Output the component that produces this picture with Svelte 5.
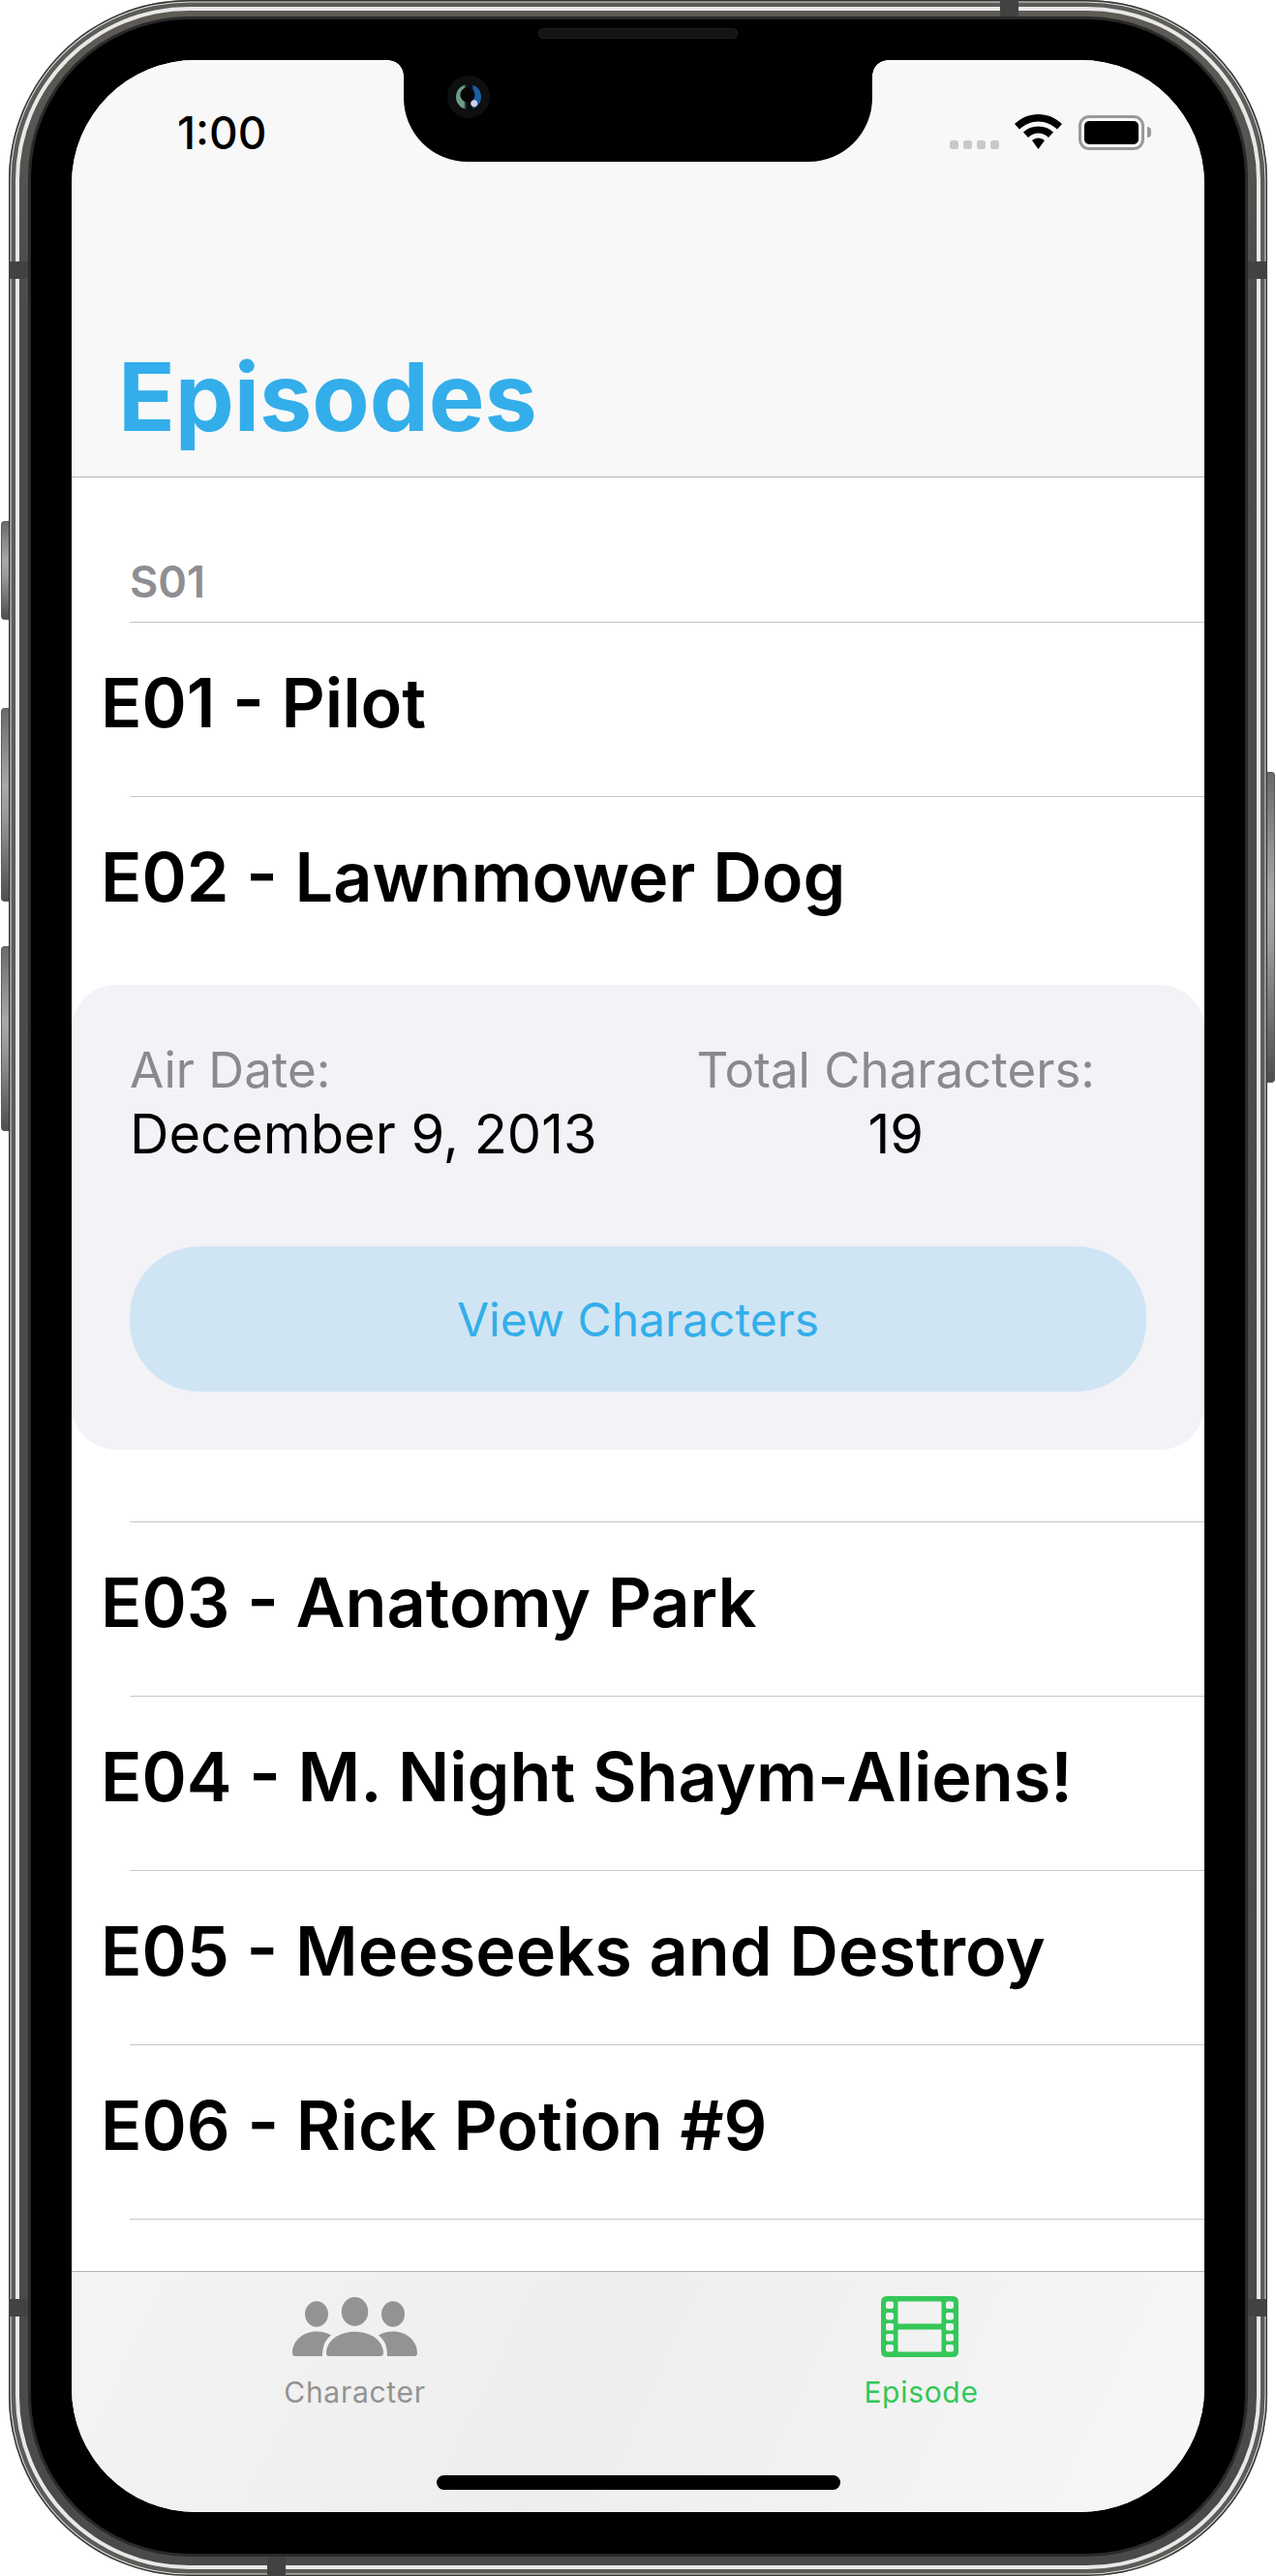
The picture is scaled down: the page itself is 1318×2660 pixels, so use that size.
<script>
    const before = ["E01 - Pilot", "E02 - Lawnmower Dog"];
    const after = [
        "E03 - Anatomy Park",
        "E04 - M. Night Shaym-Aliens!",
        "E05 - Meeseeks and Destroy",
        "E06 - Rick Potion #9",
    ];
</script>

<div class="device">
    <span class="side vol-mute"></span>
    <span class="side vol-up"></span>
    <span class="side vol-down"></span>
    <span class="side power"></span>

    <div class="band">
        <span class="antenna top"></span>
        <span class="antenna left-a"></span>
        <span class="antenna left-b"></span>
        <span class="antenna right-a"></span>
        <span class="antenna right-b"></span>
        <span class="antenna bottom"></span>

        <div class="bezel">
            <span class="speaker"></span>
            <div class="screen">
                <div class="notch">
                    <span class="camera"><span class="lens"></span></span>
                </div>

                <header class="nav">
                    <div class="status">
                        <span class="time">1:00</span>
                        <div class="status-icons">
                            <span class="signal"><i></i><i></i><i></i><i></i></span>
                            <svg class="wifi" viewBox="0 0 49 36" aria-hidden="true">
                                <path d="M24.500 0C15 0 7 3.500 0 10L5 15.500C10.500 10.500 17 7.500 24.500 7.500S38.500 10.500 44 15.500L49 10C42 3.500 34 0 24.500 0Z" />
                                <path d="M24.500 12.500C18 12.500 13 14.500 9 18.500L14 24C17 21 20.500 19.500 24.500 19.500S32 21 35 24L40 18.500C36 14.500 31 12.500 24.500 12.500Z" />
                                <path d="M24.500 24.500C22 24.500 20 25.500 18 27L24.500 36L31 27C29 25.500 27 24.500 24.500 24.500Z" />
                            </svg>
                            <span class="battery"><span class="charge"></span><span class="nub"></span></span>
                        </div>
                    </div>
                    <h1>Episodes</h1>
                </header>

                <main class="list">
                    <div class="season">S01</div>

                    {#each before as title, i}
                        <div class="row" class:plain={i === before.length - 1}>{title}</div>
                    {/each}

                    <section class="detail">
                        <div class="facts">
                            <div class="fact">
                                <div class="label">Air Date:</div>
                                <div class="value">December 9, 2013</div>
                            </div>
                            <div class="fact centered">
                                <div class="label">Total Characters:</div>
                                <div class="value">19</div>
                            </div>
                        </div>
                        <button class="view">View Characters</button>
                    </section>

                    <div class="gap"></div>

                    {#each after as title}
                        <div class="row">{title}</div>
                    {/each}
                </main>

                <footer class="tabs">
                    <div class="tab-row">
                        <div class="tab">
                            <svg class="people" viewBox="0 0 129 61" aria-hidden="true">
                                <ellipse cx="25" cy="17.500" rx="12" ry="13.200" />
                                <ellipse cx="64.500" cy="15" rx="13.800" ry="15" />
                                <ellipse cx="104" cy="17.500" rx="12" ry="13.200" />
                                <path d="M0 58C0 45 11 35.500 25 35.500C31 35.500 36 37 40 39.500C34 44 31 50 31 61H3C1 61 0 60 0 58Z" />
                                <path d="M129 58C129 45 118 35.500 104 35.500C98 35.500 93 37 89 39.500C95 44 98 50 98 61H126C128 61 129 60 129 58Z" />
                                <path d="M35 58C35 45 48 35.700 64.500 35.700S94 45 94 58C94 60 92.500 61 91 61H38C36 61 35 60 35 58Z" />
                            </svg>
                            <span class="tab-label">Character</span>
                        </div>
                        <div class="tab active">
                            <svg class="film" viewBox="0 0 80 63" aria-hidden="true">
                                <path fill-rule="evenodd" d="M6 0H74Q80 0 80 6V57Q80 63 74 63H6Q0 63 0 57V6Q0 0 6 0ZM7 5.500Q5 5.500 5 7.500V11Q5 13 7 13H11Q13 13 13 11V7.500Q13 5.500 11 5.500ZM7 17Q5 17 5 19V22.500Q5 24.500 7 24.500H11Q13 24.500 13 22.500V19Q13 17 11 17ZM7 28Q5 28 5 30V33.500Q5 35.500 7 35.500H11Q13 35.500 13 33.500V30Q13 28 11 28ZM7 39Q5 39 5 41V44.500Q5 46.500 7 46.500H11Q13 46.500 13 44.500V41Q13 39 11 39ZM7 50Q5 50 5 52V55.500Q5 57.500 7 57.500H11Q13 57.500 13 55.500V52Q13 50 11 50ZM69 5.500Q67 5.500 67 7.500V11Q67 13 69 13H73Q75 13 75 11V7.500Q75 5.500 73 5.500ZM69 17Q67 17 67 19V22.500Q67 24.500 69 24.500H73Q75 24.500 75 22.500V19Q75 17 73 17ZM69 28Q67 28 67 30V33.500Q67 35.500 69 35.500H73Q75 35.500 75 33.500V30Q75 28 73 28ZM69 39Q67 39 67 41V44.500Q67 46.500 69 46.500H73Q75 46.500 75 44.500V41Q75 39 73 39ZM69 50Q67 50 67 52V55.500Q67 57.500 69 57.500H73Q75 57.500 75 55.500V52Q75 50 73 50ZM18.500 5.500Q17.500 5.500 17.500 6.500V27.500Q17.500 28.500 18.500 28.500H61.500Q62.500 28.500 62.500 27.500V6.500Q62.500 5.500 61.500 5.500ZM18.500 34.500Q17.500 34.500 17.500 35.500V56.500Q17.500 57.500 18.500 57.500H61.500Q62.500 57.500 62.500 56.500V35.500Q62.500 34.500 61.500 34.500Z" />
                            </svg>
                            <span class="tab-label">Episode</span>
                        </div>
                    </div>
                    <span class="home"></span>
                </footer>
            </div>
        </div>
    </div>
</div>

<style>
    :global(body) {
        margin: 0;
        background: #fff;
    }

    .device {
        position: relative;
        width: 1318px;
        height: 2660px;
        box-sizing: border-box;
        padding: 0 9px;
        font-family: Inter, "Liberation Sans", sans-serif;
    }

    /* hardware buttons hang off the edge of the frame */
    .side {
        position: absolute;
        width: 8px;
        box-sizing: border-box;
        border: 1px solid #5c5c5c;
        border-right: none;
        border-radius: 4px 0 0 4px;
        background: linear-gradient(180deg, #6a6a6a, #a8a8a8 40%, #9a9a9a 55%, #4e4e4e);
    }

    .vol-mute {
        left: 1px;
        top: 538px;
        height: 102px;
    }

    .vol-up {
        left: 1px;
        top: 731px;
        height: 200px;
    }

    .vol-down {
        left: 1px;
        top: 977px;
        height: 191px;
    }

    .power {
        right: 1px;
        top: 797px;
        height: 321px;
        border: 1px solid #5c5c5c;
        border-left: none;
        border-radius: 0 4px 4px 0;
    }

    .band {
        position: relative;
        height: 2660px;
        box-sizing: border-box;
        padding: 20px 23px 23px;
        border-radius: 186px;
        background: linear-gradient(180deg, #5f5c56, #4b4b4b 12%, #4a4a4a);
        box-shadow:
            inset 0 0 0 1.500px #333,
            inset 0 0 0 2.500px #e6e6e6,
            inset 0 0 0 7px #5e5c58,
            inset 0 0 0 11px #e8e8e8;
    }

    .antenna {
        position: absolute;
        background: #424242;
    }

    .antenna.top {
        left: 1024px;
        top: 0;
        width: 19px;
        height: 20px;
    }

    .antenna.bottom {
        left: 267px;
        bottom: 0;
        width: 19px;
        height: 23px;
    }

    .antenna.left-a,
    .antenna.left-b {
        left: 0;
        width: 20px;
        height: 18px;
    }

    .antenna.right-a,
    .antenna.right-b {
        right: 0;
        width: 20px;
        height: 18px;
    }

    .antenna.left-a,
    .antenna.right-a {
        top: 270px;
    }

    .antenna.left-b,
    .antenna.right-b {
        top: 2374px;
    }

    .bezel {
        position: relative;
        height: 100%;
        box-sizing: border-box;
        padding: 42px 42px 43px;
        background: #000;
        border-radius: 163px;
        box-shadow: 0 0 0 3px #2a2a2a;
    }

    .speaker {
        position: absolute;
        left: 524px;
        top: 9px;
        width: 206px;
        height: 11px;
        border-radius: 6px;
        background: #141414;
        box-shadow: inset 0 0 0 1px #1f1f1f;
    }

    .screen {
        position: relative;
        height: 100%;
        display: flex;
        flex-direction: column;
        overflow: hidden;
        border-radius: 128px;
        background: #fff;
    }

    .notch {
        position: absolute;
        left: 343px;
        top: 0;
        width: 484px;
        height: 105px;
        background: #000;
        border-radius: 0 0 66px 66px;
    }

    /* small concave corners where the notch meets the top edge */
    .notch::before,
    .notch::after {
        content: "";
        position: absolute;
        top: 0;
        width: 16px;
        height: 16px;
    }

    .notch::before {
        left: -16px;
        background: radial-gradient(circle at 0 100%, transparent 15.500px, #000 16px);
    }

    .notch::after {
        right: -16px;
        background: radial-gradient(circle at 100% 100%, transparent 15.500px, #000 16px);
    }

    .camera {
        position: absolute;
        left: 45px;
        top: 16px;
        width: 44px;
        height: 44px;
        display: flex;
        align-items: center;
        justify-content: center;
        border-radius: 50%;
        background: #0d0f10;
    }

    .lens {
        width: 26px;
        height: 26px;
        border-radius: 50%;
        background:
            radial-gradient(circle at 72% 76%, #d5cfe6 0 3px, transparent 4px),
            radial-gradient(circle at 46% 42%, #050505 0 7px, transparent 8px),
            linear-gradient(90deg, #6f9c86 0 30%, #0a0d0e 42% 62%, #1a5fa8 72%);
    }

    .nav {
        flex: none;
        height: 431px;
        box-sizing: border-box;
        display: flex;
        flex-direction: column;
        justify-content: space-between;
        background: #f8f8f8;
        border-bottom: 1px solid #b4b4b4;
    }

    .status {
        display: flex;
        justify-content: space-between;
        align-items: flex-start;
        padding: 50px 62px 0 109px;
    }

    .time {
        font-size: 46px;
        line-height: 50px;
        font-weight: 500;
        color: #000;
    }

    .status-icons {
        display: flex;
        align-items: flex-start;
        margin-top: 6px;
    }

    .signal {
        display: flex;
        gap: 5px;
        margin-top: 27px;
        margin-right: 16px;
    }

    .signal i {
        width: 9px;
        height: 9px;
        border-radius: 2.500px;
        background: #c9c9c9;
    }

    .wifi {
        width: 49px;
        height: 36px;
        margin-right: 17px;
        fill: #000;
    }

    .battery {
        position: relative;
        width: 68px;
        height: 36px;
        box-sizing: border-box;
        margin-top: 1px;
        padding: 3px;
        border: 3px solid #999;
        border-radius: 11px;
    }

    .charge {
        display: block;
        width: 100%;
        height: 100%;
        background: #000;
        border-radius: 5px;
    }

    .nub {
        position: absolute;
        right: -10px;
        top: 9px;
        width: 4px;
        height: 11px;
        background: #999;
        border-radius: 0 5px 5px 0;
    }

    h1 {
        margin: 0;
        padding: 0 0 32px 48px;
        font-size: 97px;
        line-height: 100px;
        letter-spacing: -0.100px;
        font-weight: 700;
        color: #33aeea;
    }

    .list {
        flex: 1;
        min-height: 0;
        overflow: hidden;
        background: #fff;
    }

    .season {
        height: 150px;
        box-sizing: border-box;
        margin-left: 60px;
        padding-top: 85px;
        font-size: 45px;
        line-height: 46px;
        font-weight: 600;
        color: #8e8e93;
        border-bottom: 1px solid #c6c6c8;
    }

    .row {
        height: 180px;
        margin-left: 30px;
        padding-bottom: 16px;
        position: relative;
        display: flex;
        align-items: center;
        box-sizing: border-box;
        font-size: 70.200px;
        font-weight: 600;
        color: #000;
    }

    .row::after {
        content: "";
        position: absolute;
        left: 30px;
        right: 0;
        bottom: 0;
        height: 1px;
        background: #c6c6c8;
    }

    .row.plain::after {
        display: none;
    }

    .detail {
        height: 480px;
        box-sizing: border-box;
        margin-top: 14px;
        padding: 56px 60px 0;
        background: #f2f2f7;
        border-radius: 46px;
    }

    .facts {
        display: flex;
        justify-content: space-between;
        padding-right: 53px;
    }

    .fact {
        display: flex;
        flex-direction: column;
    }

    .centered {
        align-items: center;
    }

    .label {
        font-size: 51px;
        line-height: 63px;
        color: #8a8a8e;
    }

    .value {
        font-size: 56px;
        line-height: 70px;
        color: #000;
    }

    .view {
        display: block;
        width: 100%;
        height: 150px;
        margin-top: 81px;
        border: none;
        border-radius: 72px;
        font-family: inherit;
        font-size: 48px;
        color: #33aeea;
        background: #cfe5f4;
    }

    .gap {
        height: 75px;
        box-sizing: border-box;
        margin-left: 60px;
        border-bottom: 1px solid #c6c6c8;
    }

    .tabs {
        position: relative;
        flex: none;
        height: 249px;
        box-sizing: border-box;
        border-top: 1px solid #b4b4b4;
        background: linear-gradient(115deg, #f3f4f4, #eeeeee 45%, #f7f7f7);
    }

    .tab-row {
        display: grid;
        grid-template-columns: 1fr 1fr;
    }

    .tab {
        display: flex;
        flex-direction: column;
        align-items: center;
        padding-top: 25px;
    }

    .people {
        width: 129px;
        height: 61px;
        margin: 1px 0;
        fill: #939393;
    }

    .film {
        width: 80px;
        height: 63px;
        margin-right: 3px;
        fill: #34c759;
    }

    .tab-label {
        margin-top: 18px;
        font-size: 30px;
        line-height: 36px;
        letter-spacing: 0.700px;
        color: #939393;
    }

    .active .tab-label {
        color: #34c759;
    }

    .home {
        position: absolute;
        left: 377px;
        bottom: 23px;
        width: 417px;
        height: 15px;
        border-radius: 8px;
        background: #000;
    }
</style>
